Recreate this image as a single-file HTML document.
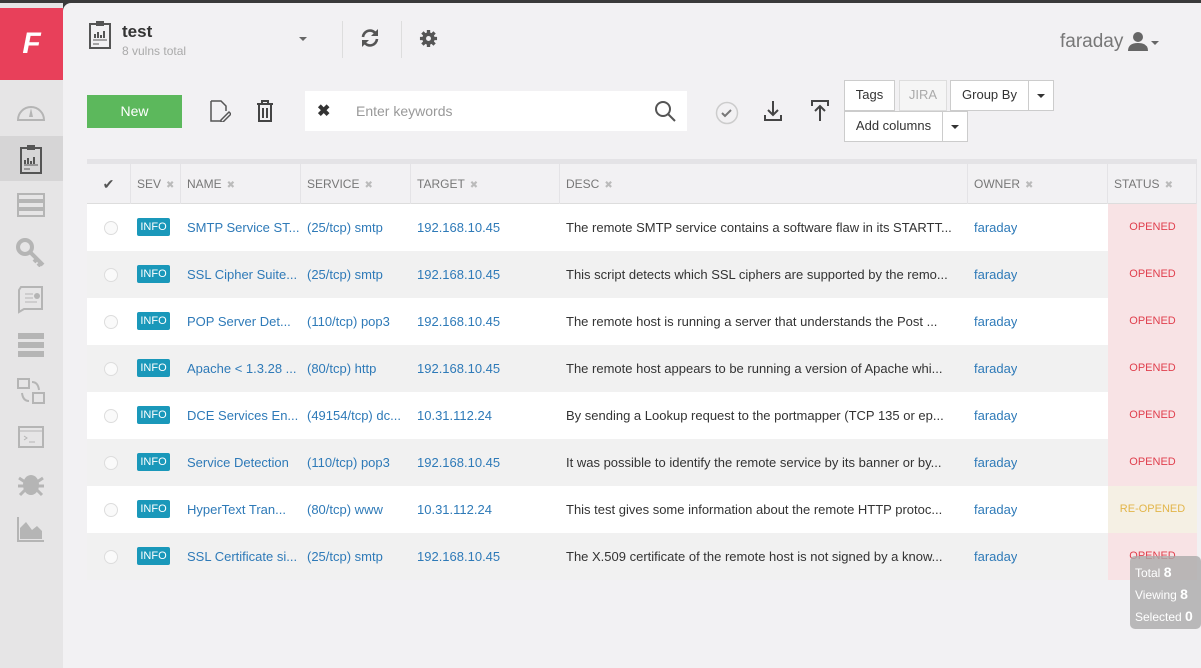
<!DOCTYPE html>
<html><head><meta charset="utf-8">
<style>
*{box-sizing:border-box;margin:0;padding:0}
body{width:1201px;height:668px;overflow:hidden;background:#3a3a3a;font-family:"Liberation Sans",sans-serif;position:relative}
.side{position:absolute;left:0;top:3px;width:63px;height:665px;background:#e6e5e6}
.logo{position:absolute;left:0;top:5px;width:63px;height:72px;background:#e8405a;color:#fff;font-weight:bold;font-style:italic;font-size:30px;text-align:center;line-height:72px}
.main{position:absolute;left:63px;top:3px;width:1138px;height:665px;background:#f2f1f3;border-top-left-radius:8px}
.ic{position:absolute;left:15px;width:32px;height:30px}
.a{position:absolute}
.t{position:absolute;font-size:13px;white-space:nowrap}
.btn{position:absolute;background:#fff;border:1px solid #ccc;font-size:13px;color:#333;text-align:center;line-height:28px}
.row{position:absolute;left:87px;width:1110px;height:47px}
.row div{position:absolute;top:0;line-height:47px;font-size:13px;white-space:nowrap;overflow:hidden}
.lnk{color:#2e7ab8}
.row .info{background:#1a98ba;color:#fff;font-size:11px;line-height:18px;top:14px;height:18px;width:33px;text-align:center;border-radius:2px;left:50px}
.row .rad{left:17px;top:17px;width:14px;height:14px;border:1px solid #ddd;border-radius:50%;background:#fafafa}
.row .st{left:1021px;width:89px;text-align:center;font-size:11px;color:#e0404e}
.hd{position:absolute;top:164px;height:40px;line-height:40px;font-size:12px;color:#777;border-right:1px solid #e4e3e6;padding-left:6px}
.hd span{color:#bbb;font-size:10px;margin-left:5px}
</style></head><body>
<div class="side">
<div class="logo">F</div>
<div class="a" style="left:0;top:133px;width:63px;height:45px;background:#d6d5d6"></div>
<svg class="ic" style="top:93px" viewBox="0 0 32 30"><path d="M3 24a13 13 0 1 1 26 0z" fill="none" stroke="#b5b5b5" stroke-width="2"/><path d="M16 12l-2 9h4z" fill="#b5b5b5"/></svg>
<svg class="ic" style="top:141px" viewBox="0 0 32 30"><rect x="6" y="4" width="20" height="25" fill="none" stroke="#555" stroke-width="2"/><rect x="12" y="1" width="8" height="5" fill="#555"/><path d="M10 20v-4M13 20v-6M16 20v-3M19 20v-7" stroke="#555" stroke-width="2"/><path d="M9 21h14M9 25h6" stroke="#555"/></svg>
<svg class="ic" style="top:188px" viewBox="0 0 32 30"><g fill="none" stroke="#b5b5b5" stroke-width="2"><rect x="3" y="3" width="26" height="6"/><rect x="3" y="11" width="26" height="6"/><rect x="3" y="19" width="26" height="6"/></g></svg>
<svg class="ic" style="top:234px" viewBox="0 0 32 30"><circle cx="10" cy="10" r="7" fill="none" stroke="#b5b5b5" stroke-width="4"/><path d="M15 15l13 13M22 22l-3 3M26 26l-3 3" stroke="#b5b5b5" stroke-width="4"/></svg>
<svg class="ic" style="top:281px" viewBox="0 0 32 30"><path d="M6 3h21v22H9l-5 3V6z" fill="none" stroke="#b5b5b5" stroke-width="2"/><path d="M10 10h8M10 14h8M10 18h12" stroke="#b5b5b5"/><circle cx="22" cy="12" r="3" fill="#b5b5b5"/></svg>
<svg class="ic" style="top:327px" viewBox="0 0 32 30"><g fill="#b5b5b5"><rect x="3" y="3" width="26" height="6"/><rect x="3" y="12" width="26" height="6"/><rect x="3" y="21" width="26" height="6"/></g></svg>
<svg class="ic" style="top:373px" viewBox="0 0 32 30"><g fill="none" stroke="#b5b5b5" stroke-width="2"><rect x="3" y="3" width="11" height="9"/><rect x="18" y="17" width="11" height="10"/><path d="M17 6q6 0 7 8M14 25q-6 0-7-8"/></g></svg>
<svg class="ic" style="top:419px" viewBox="0 0 32 30"><rect x="4" y="5" width="24" height="20" fill="none" stroke="#b5b5b5" stroke-width="2"/><path d="M4 9h24M9 14l3 2-3 2M14 20h6" stroke="#b5b5b5" fill="none"/></svg>
<svg class="ic" style="top:465px" viewBox="0 0 32 30"><ellipse cx="16" cy="17" rx="8" ry="10" fill="#b5b5b5"/><path d="M4 10l6 4M28 10l-6 4M3 18h6M29 18h-6M5 27l5-5M27 27l-5-5" stroke="#b5b5b5" stroke-width="3"/></svg>
<svg class="ic" style="top:511px" viewBox="0 0 32 30"><path d="M3 3v24h26" fill="none" stroke="#b5b5b5" stroke-width="2"/><path d="M5 25V14l6-6 6 8 5-4 5 5v8z" fill="#b5b5b5"/></svg>
</div>
<div class="main"></div>
<!-- header -->
<svg class="a" style="left:88px;top:20px" width="24" height="30" viewBox="0 0 24 30"><rect x="2" y="4" width="20" height="24" fill="none" stroke="#555" stroke-width="2"/><rect x="8" y="1" width="8" height="5" fill="#555"/><path d="M7 18v-4M10 18v-6M13 18v-3M16 18v-7" stroke="#555" stroke-width="2"/><path d="M5 20h14M5 24h6" stroke="#555"/></svg>
<div class="t" style="left:122px;top:22px;font-size:17px;color:#333;font-weight:bold">test</div>
<div class="t" style="left:122px;top:44px;font-size:12px;color:#aaa">8 vulns total</div>
<div class="a" style="left:299px;top:37px;border:4px solid transparent;border-top-color:#666;border-bottom:0"></div>
<div class="a" style="left:342px;top:21px;width:1px;height:37px;background:#ddd"></div>
<div class="a" style="left:401px;top:21px;width:1px;height:37px;background:#ddd"></div>
<svg class="a" style="left:360px;top:28px" width="20" height="20" viewBox="0 0 20 20"><g fill="none" stroke="#555" stroke-width="2.6"><path d="M3 9a7 7 0 0 1 13-3"/><path d="M17 11a7 7 0 0 1-13 3"/></g><path d="M18 1v7h-7z" fill="#555"/><path d="M2 19v-7h7z" fill="#555"/></svg>
<svg class="a" style="left:419px;top:29px" width="19" height="19" viewBox="0 0 20 20"><g fill="#555"><circle cx="10" cy="10" r="6.5"/><g stroke="#555" stroke-width="3.5"><path d="M10 1v18M1 10h18M3.6 3.6l12.8 12.8M16.4 3.6L3.6 16.4"/></g></g><circle cx="10" cy="10" r="2.6" fill="#f2f1f3"/></svg>
<div class="t" style="left:1060px;top:31px;font-size:19px;color:#777">faraday</div>
<svg class="a" style="left:1128px;top:31px" width="20" height="20" viewBox="0 0 20 20"><circle cx="10" cy="6" r="5" fill="#666"/><path d="M0 20q0-8 10-8t10 8z" fill="#666"/></svg>
<div class="a" style="left:1151px;top:41px;border:4px solid transparent;border-top-color:#666;border-bottom:0"></div>
<!-- toolbar -->
<div class="a" style="left:87px;top:95px;width:95px;height:33px;background:#5cb85c;color:#fff;font-size:14px;text-align:center;line-height:33px">New</div>
<svg class="a" style="left:209px;top:100px" width="22" height="22" viewBox="0 0 22 22"><path d="M2 1h10l5 5v5M2 1v20h10" fill="none" stroke="#555" stroke-width="1.5"/><path d="M12 20l8-8 2 2-8 8h-2z" fill="none" stroke="#555" stroke-width="1.5"/></svg>
<svg class="a" style="left:256px;top:100px" width="18" height="22" viewBox="0 0 18 22"><path d="M1 4h16M6 4V1h6v3M3 5v16h12V5M7 8v10M11 8v10" fill="none" stroke="#444" stroke-width="2"/></svg>
<div class="a" style="left:305px;top:91px;width:382px;height:40px;background:#fff"></div>
<div class="t" style="left:317px;top:101px;font-size:16px;color:#333;font-weight:bold">✖</div>
<div class="t" style="left:356px;top:103px;font-size:14px;color:#999">Enter keywords</div>
<svg class="a" style="left:654px;top:100px" width="22" height="22" viewBox="0 0 22 22"><circle cx="9" cy="9" r="7" fill="none" stroke="#555" stroke-width="2"/><path d="M14 14l7 7" stroke="#555" stroke-width="2"/></svg>
<svg class="a" style="left:715px;top:101px" width="24" height="24" viewBox="0 0 24 24"><circle cx="12" cy="12" r="10.5" fill="none" stroke="#ccc" stroke-width="1.5"/><path d="M7 12l3 3 6-6" fill="none" stroke="#777" stroke-width="2"/></svg>
<svg class="a" style="left:763px;top:99px" width="20" height="24" viewBox="0 0 20 24"><path d="M10 2v14M5 11l5 5 5-5M2 16v5h16v-5" fill="none" stroke="#444" stroke-width="2"/></svg>
<svg class="a" style="left:810px;top:99px" width="20" height="24" viewBox="0 0 20 24"><path d="M10 22V7M5 12l5-5 5 5M2 7V2h16v5" fill="none" stroke="#444" stroke-width="2"/></svg>
<div class="btn" style="left:844px;top:80px;width:51px;height:31px">Tags</div>
<div class="btn" style="left:899px;top:80px;width:48px;height:31px;background:#f5f5f5;color:#aaa;border-color:#ddd">JIRA</div>
<div class="btn" style="left:950px;top:80px;width:79px;height:31px">Group By</div>
<div class="btn" style="left:1028px;top:80px;width:26px;height:31px"></div>
<div class="a" style="left:1037px;top:94px;border:4px solid transparent;border-top-color:#333;border-bottom:0"></div>
<div class="btn" style="left:844px;top:111px;width:99px;height:31px">Add columns</div>
<div class="btn" style="left:942px;top:111px;width:26px;height:31px"></div>
<div class="a" style="left:951px;top:125px;border:4px solid transparent;border-top-color:#333;border-bottom:0"></div>
<!-- table header -->
<div class="a" style="left:87px;top:159px;width:1110px;height:5px;background:#e4e3e6"></div>
<div class="a" style="left:87px;top:203px;width:1110px;height:1px;background:#ddd"></div>
<div class="hd" style="left:87px;width:44px;color:#555;text-align:center;padding:0;font-size:14px">✔</div>
<div class="hd" style="left:131px;width:50px">SEV<span>✖</span></div>
<div class="hd" style="left:181px;width:120px">NAME<span>✖</span></div>
<div class="hd" style="left:301px;width:110px">SERVICE<span>✖</span></div>
<div class="hd" style="left:411px;width:149px">TARGET<span>✖</span></div>
<div class="hd" style="left:560px;width:408px">DESC<span>✖</span></div>
<div class="hd" style="left:968px;width:140px">OWNER<span>✖</span></div>
<div class="hd" style="left:1108px;width:89px">STATUS<span>✖</span></div>
<!-- rows -->
<div class="row" style="top:204px;background:#fff"><div class="rad"></div><div class="info">INFO</div><div class="lnk" style="left:100px">SMTP Service ST...</div><div class="lnk" style="left:220px">(25/tcp) smtp</div><div class="lnk" style="left:330px">192.168.10.45</div><div style="left:479px;color:#333">The remote SMTP service contains a software flaw in its STARTT...</div><div class="lnk" style="left:887px">faraday</div><div class="st" style="background:#f8e3e5">OPENED</div></div>
<div class="row" style="top:251px;background:#f1f1f1"><div class="rad"></div><div class="info">INFO</div><div class="lnk" style="left:100px">SSL Cipher Suite...</div><div class="lnk" style="left:220px">(25/tcp) smtp</div><div class="lnk" style="left:330px">192.168.10.45</div><div style="left:479px;color:#333">This script detects which SSL ciphers are supported by the remo...</div><div class="lnk" style="left:887px">faraday</div><div class="st" style="background:#f8e3e5">OPENED</div></div>
<div class="row" style="top:298px;background:#fff"><div class="rad"></div><div class="info">INFO</div><div class="lnk" style="left:100px">POP Server Det...</div><div class="lnk" style="left:220px">(110/tcp) pop3</div><div class="lnk" style="left:330px">192.168.10.45</div><div style="left:479px;color:#333">The remote host is running a server that understands the Post ...</div><div class="lnk" style="left:887px">faraday</div><div class="st" style="background:#f8e3e5">OPENED</div></div>
<div class="row" style="top:345px;background:#f1f1f1"><div class="rad"></div><div class="info">INFO</div><div class="lnk" style="left:100px">Apache &lt; 1.3.28 ...</div><div class="lnk" style="left:220px">(80/tcp) http</div><div class="lnk" style="left:330px">192.168.10.45</div><div style="left:479px;color:#333">The remote host appears to be running a version of Apache whi...</div><div class="lnk" style="left:887px">faraday</div><div class="st" style="background:#f8e3e5">OPENED</div></div>
<div class="row" style="top:392px;background:#fff"><div class="rad"></div><div class="info">INFO</div><div class="lnk" style="left:100px">DCE Services En...</div><div class="lnk" style="left:220px">(49154/tcp) dc...</div><div class="lnk" style="left:330px">10.31.112.24</div><div style="left:479px;color:#333">By sending a Lookup request to the portmapper (TCP 135 or ep...</div><div class="lnk" style="left:887px">faraday</div><div class="st" style="background:#f8e3e5">OPENED</div></div>
<div class="row" style="top:439px;background:#f1f1f1"><div class="rad"></div><div class="info">INFO</div><div class="lnk" style="left:100px">Service Detection</div><div class="lnk" style="left:220px">(110/tcp) pop3</div><div class="lnk" style="left:330px">192.168.10.45</div><div style="left:479px;color:#333">It was possible to identify the remote service by its banner or by...</div><div class="lnk" style="left:887px">faraday</div><div class="st" style="background:#f8e3e5">OPENED</div></div>
<div class="row" style="top:486px;background:#fff"><div class="rad"></div><div class="info">INFO</div><div class="lnk" style="left:100px">HyperText Tran...</div><div class="lnk" style="left:220px">(80/tcp) www</div><div class="lnk" style="left:330px">10.31.112.24</div><div style="left:479px;color:#333">This test gives some information about the remote HTTP protoc...</div><div class="lnk" style="left:887px">faraday</div><div class="st" style="background:#f5f0e4;color:#e2b54a">RE-OPENED</div></div>
<div class="row" style="top:533px;background:#f1f1f1"><div class="rad"></div><div class="info">INFO</div><div class="lnk" style="left:100px">SSL Certificate si...</div><div class="lnk" style="left:220px">(25/tcp) smtp</div><div class="lnk" style="left:330px">192.168.10.45</div><div style="left:479px;color:#333">The X.509 certificate of the remote host is not signed by a know...</div><div class="lnk" style="left:887px">faraday</div><div class="st" style="background:#f8e3e5">OPENED</div></div>
<div class="a" style="left:1130px;top:556px;width:71px;height:73px;background:rgba(170,170,170,0.8);border-radius:5px;color:#fff;font-size:12px;padding:6px 0 0 5px;line-height:21px">Total <b style="font-size:14px">8</b><br>Viewing <b style="font-size:14px">8</b><br>Selected <b style="font-size:14px">0</b></div>
</body></html>
